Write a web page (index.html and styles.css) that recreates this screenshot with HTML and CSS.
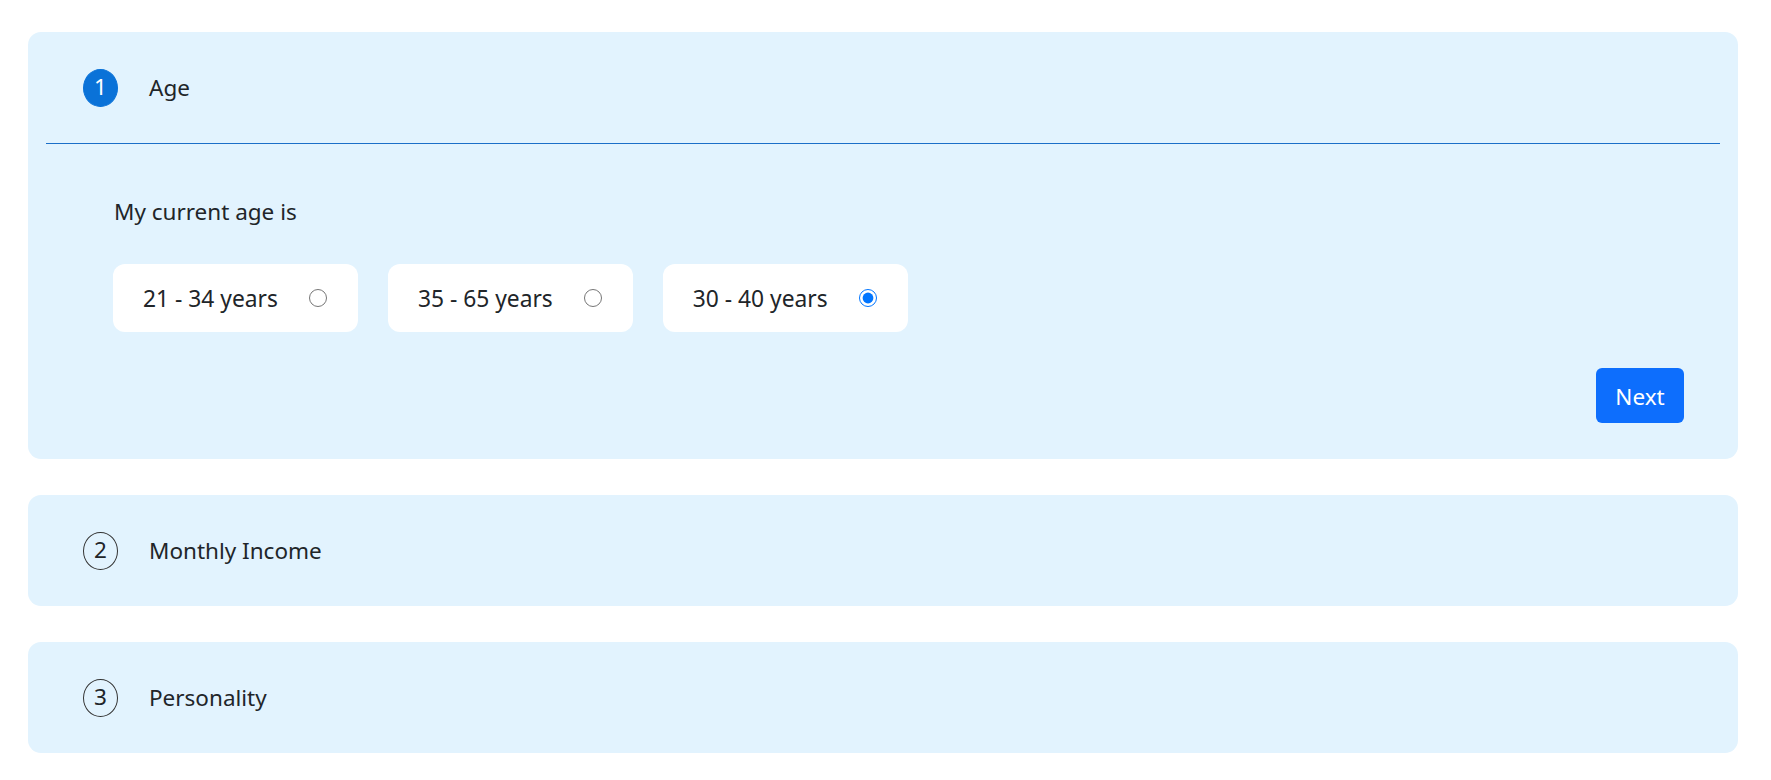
FILE: index.html
```html
<!DOCTYPE html>
<html lang="en">
<head>
    <meta charset="UTF-8">
    <meta name="viewport" content="width=device-width, initial-scale=1.0">
    <title>Questionnaire</title>
    <link rel="stylesheet" href="styles.css">
</head>
<body>
    <div class="steps">
        <div class="step open">
            <div class="step-header">
                <span class="step-num active">1</span>
                <span class="step-title">Age</span>
            </div>
            <div class="step-body">
                <div class="question">My current age is</div>
                <div class="options">
                    <label class="option">
                        <span>21 - 34 years</span>
                        <input type="radio" name="age" value="21-34">
                    </label>
                    <label class="option">
                        <span>35 - 65 years</span>
                        <input type="radio" name="age" value="35-65">
                    </label>
                    <label class="option">
                        <span>30 - 40 years</span>
                        <input type="radio" name="age" value="30-40" checked>
                    </label>
                </div>
                <div class="actions">
                    <button class="btn-next">Next</button>
                </div>
            </div>
        </div>

        <div class="step">
            <div class="step-header">
                <span class="step-num">2</span>
                <span class="step-title">Monthly Income</span>
            </div>
        </div>

        <div class="step">
            <div class="step-header">
                <span class="step-num">3</span>
                <span class="step-title">Personality</span>
            </div>
        </div>
    </div>
</body>
</html>
```

FILE: styles.css
```css
body {
    margin: 0;
    background-color: #ffffff;
    font-family: "Noto Sans", "Open Sans", sans-serif;
    font-size: 22.5px;
    color: #212529;
}
.steps {
    display: flex;
    flex-direction: column;
    gap: 36px;
    padding: 32px 33px 0 28px;
}
.step {
    background-color: #e2f3fe;
    border-radius: 13px;
}
.step.open {
    padding-bottom: 1px;
}
.step-header {
    display: flex;
    align-items: center;
    gap: 31px;
    height: 111px;
    margin: 0 18px;
    padding-left: 37px;
}
.step.open .step-header {
    border-bottom: 1px solid #1b6fc8;
}
.step-num {
    display: flex;
    align-items: center;
    justify-content: center;
    width: 33px;
    height: 36px;
    border: 1px solid #333;
    border-radius: 50%;
    line-height: 1;
}
.step-num.active {
    background-color: #0a72d8;
    border-color: #0a72d8;
    color: white;
}
.step-body {
    padding: 53px 54px 35px 86px;
}
.question {
    line-height: 30px;
}
.options {
    display: flex;
    gap: 30px;
    margin-top: 37px;
    margin-left: -1px;
}
.option {
    display: flex;
    align-items: center;
    gap: 31px;
    height: 68px;
    padding: 0 31px 0 30px;
    background-color: white;
    border-radius: 12px;
    font-size: 22.8px;
    cursor: pointer;
}
.option input {
    width: 18px;
    height: 18px;
    margin: 0;
}
.actions {
    display: flex;
    justify-content: flex-end;
    margin-top: 36px;
}
.btn-next {
    width: 88px;
    height: 55px;
    padding-top: 2px;
    border: none;
    border-radius: 6px;
    background-color: #0d6efd;
    color: white;
    font-family: inherit;
    font-size: 22.5px;
    cursor: pointer;
}
```
